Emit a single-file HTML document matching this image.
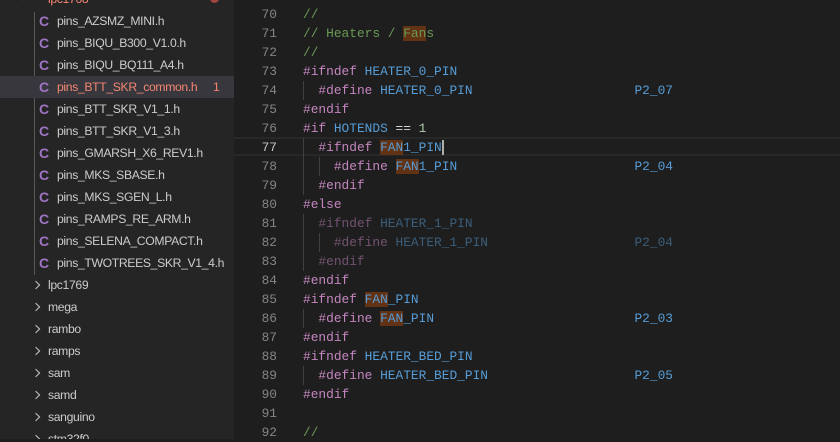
<!DOCTYPE html>
<html><head><meta charset="utf-8"><style>
*{margin:0;padding:0;box-sizing:border-box}
body{width:840px;height:439px;overflow:hidden;background:#1e1e1e;position:relative;font-family:"Liberation Sans",sans-serif}
#side{position:absolute;left:0;top:0;width:234px;height:439px;background:#252526;overflow:hidden}
.row{position:absolute;left:0;width:234px;height:22px;line-height:22px;font-size:12.2px;letter-spacing:-0.35px;color:#cccccc;white-space:nowrap}
.row .c{position:absolute;left:39px;color:#a074c4;font-weight:bold;font-size:14px;letter-spacing:0}
.row .t{position:absolute;left:57px}
.row .ch{position:absolute;left:33px;top:8px;width:6px;height:6px;border-right:1px solid #c5c5c5;border-top:1px solid #c5c5c5;transform:rotate(45deg)}
.row .ft{position:absolute;left:48px}
#guide{position:absolute;left:34px;top:12px;width:1px;height:263px;background:#585858}
#ed{position:absolute;left:234px;top:0;width:606px;height:439px}
.ln{position:absolute;left:0;width:43px;text-align:right;font-family:"Liberation Mono",monospace;font-size:12.85px;color:#858585;height:19px;line-height:19px}
.cd{position:absolute;left:69px;font-family:"Liberation Mono",monospace;font-size:12.85px;color:#d4d4d4;height:19px;line-height:19px;white-space:pre}
.k{color:#c586c0}.i{color:#569cd6}.m{color:#6a9955}.n{color:#b5cea8}
.h{background:#613214}
.dim{opacity:.5}
.g{position:absolute;width:1px;background:#404040}
</style></head><body>
<div id="side">
<div class="row" style="top:-12px"><span class="ch" style="transform:rotate(135deg);left:20px;top:5px"></span><span class="ft" style="left:48px;color:#f48771">lpc1768</span><span style="position:absolute;left:210px;top:6px;width:9px;height:9px;border-radius:50%;background:#a1463f"></span></div>
<div id="guide"></div>
<div class="row" style="top:10px"><span class="c">C</span><span class="t">pins_AZSMZ_MINI.h</span></div>
<div class="row" style="top:32px"><span class="c">C</span><span class="t">pins_BIQU_B300_V1.0.h</span></div>
<div class="row" style="top:54px"><span class="c">C</span><span class="t">pins_BIQU_BQ111_A4.h</span></div>
<div class="row" style="top:76px;background:#37373d"><span class="c">C</span><span class="t" style="color:#f48771">pins_BTT_SKR_common.h</span><span style="position:absolute;left:213px;color:#f48771">1</span></div>
<div class="row" style="top:98px"><span class="c">C</span><span class="t">pins_BTT_SKR_V1_1.h</span></div>
<div class="row" style="top:120px"><span class="c">C</span><span class="t">pins_BTT_SKR_V1_3.h</span></div>
<div class="row" style="top:142px"><span class="c">C</span><span class="t">pins_GMARSH_X6_REV1.h</span></div>
<div class="row" style="top:164px"><span class="c">C</span><span class="t">pins_MKS_SBASE.h</span></div>
<div class="row" style="top:186px"><span class="c">C</span><span class="t">pins_MKS_SGEN_L.h</span></div>
<div class="row" style="top:208px"><span class="c">C</span><span class="t">pins_RAMPS_RE_ARM.h</span></div>
<div class="row" style="top:230px"><span class="c">C</span><span class="t">pins_SELENA_COMPACT.h</span></div>
<div class="row" style="top:252px"><span class="c">C</span><span class="t">pins_TWOTREES_SKR_V1_4.h</span></div>
<div class="row" style="top:274px"><span class="ch"></span><span class="ft">lpc1769</span></div>
<div class="row" style="top:296px"><span class="ch"></span><span class="ft">mega</span></div>
<div class="row" style="top:318px"><span class="ch"></span><span class="ft">rambo</span></div>
<div class="row" style="top:340px"><span class="ch"></span><span class="ft">ramps</span></div>
<div class="row" style="top:362px"><span class="ch"></span><span class="ft">sam</span></div>
<div class="row" style="top:384px"><span class="ch"></span><span class="ft">samd</span></div>
<div class="row" style="top:406px"><span class="ch"></span><span class="ft">sanguino</span></div>
<div class="row" style="top:428px"><span class="ch"></span><span class="ft">stm32f0</span></div>
</div>
<div id="ed">
<div style="position:absolute;left:0;top:137px;width:606px;height:19px;border-top:2px solid #282828;border-bottom:2px solid #282828"></div>
<div class="g" style="left:69px;top:81px;height:19px"></div>
<div class="g" style="left:69px;top:138px;height:57px"></div>
<div class="g" style="left:85px;top:157px;height:19px"></div>
<div class="g" style="left:69px;top:214px;height:57px"></div>
<div class="g" style="left:85px;top:233px;height:19px"></div>
<div class="g" style="left:69px;top:309px;height:19px"></div>
<div class="g" style="left:69px;top:366px;height:19px"></div>

<div class="ln" style="top:5px">70</div><div class="cd" style="top:5px"><span class="m">//</span></div>
<div class="ln" style="top:24px">71</div><div class="cd" style="top:24px"><span class="m">// Heaters / <span class="h">Fan</span>s</span></div>
<div class="ln" style="top:43px">72</div><div class="cd" style="top:43px"><span class="m">//</span></div>
<div class="ln" style="top:62px">73</div><div class="cd" style="top:62px"><span class="k">#ifndef</span> <span class="i">HEATER_0_PIN</span></div>
<div class="ln" style="top:81px">74</div><div class="cd" style="top:81px">  <span class="k">#define</span> <span class="i">HEATER_0_PIN</span>                     <span class="i">P2_07</span></div>
<div class="ln" style="top:100px">75</div><div class="cd" style="top:100px"><span class="k">#endif</span></div>
<div class="ln" style="top:119px">76</div><div class="cd" style="top:119px"><span class="k">#if</span> <span class="i">HOTENDS</span> == <span class="n">1</span></div>
<div class="ln" style="top:138px;color:#c6c6c6">77</div><div class="cd" style="top:138px">  <span class="k">#ifndef</span> <span class="i"><span class="h">FAN</span>1_PIN</span><span style="display:inline-block;width:2px;height:15px;background:#aeafad;vertical-align:middle"></span></div>
<div class="ln" style="top:157px">78</div><div class="cd" style="top:157px">    <span class="k">#define</span> <span class="i"><span class="h">FAN</span>1_PIN</span>                       <span class="i">P2_04</span></div>
<div class="ln" style="top:176px">79</div><div class="cd" style="top:176px">  <span class="k">#endif</span></div>
<div class="ln" style="top:195px">80</div><div class="cd" style="top:195px"><span class="k">#else</span></div>
<div class="ln" style="top:214px">81</div><div class="cd dim" style="top:214px">  <span class="k">#ifndef</span> <span class="i">HEATER_1_PIN</span></div>
<div class="ln" style="top:233px">82</div><div class="cd dim" style="top:233px">    <span class="k">#define</span> <span class="i">HEATER_1_PIN</span>                   <span class="i">P2_04</span></div>
<div class="ln" style="top:252px">83</div><div class="cd dim" style="top:252px">  <span class="k">#endif</span></div>
<div class="ln" style="top:271px">84</div><div class="cd" style="top:271px"><span class="k">#endif</span></div>
<div class="ln" style="top:290px">85</div><div class="cd" style="top:290px"><span class="k">#ifndef</span> <span class="i"><span class="h">FAN</span>_PIN</span></div>
<div class="ln" style="top:309px">86</div><div class="cd" style="top:309px">  <span class="k">#define</span> <span class="i"><span class="h">FAN</span>_PIN</span>                          <span class="i">P2_03</span></div>
<div class="ln" style="top:328px">87</div><div class="cd" style="top:328px"><span class="k">#endif</span></div>
<div class="ln" style="top:347px">88</div><div class="cd" style="top:347px"><span class="k">#ifndef</span> <span class="i">HEATER_BED_PIN</span></div>
<div class="ln" style="top:366px">89</div><div class="cd" style="top:366px">  <span class="k">#define</span> <span class="i">HEATER_BED_PIN</span>                   <span class="i">P2_05</span></div>
<div class="ln" style="top:385px">90</div><div class="cd" style="top:385px"><span class="k">#endif</span></div>
<div class="ln" style="top:404px">91</div>
<div class="ln" style="top:423px">92</div><div class="cd" style="top:423px"><span class="m">//</span></div>
</div>
</body></html>
